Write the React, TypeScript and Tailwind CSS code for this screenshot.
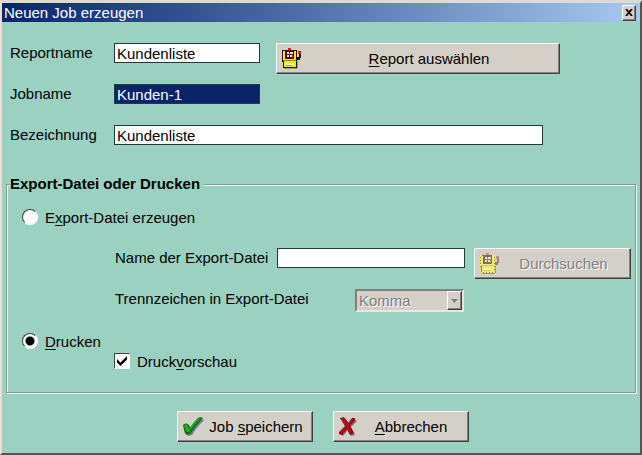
import React, { useState } from "react";
import type { ReactNode } from "react";

const raised =
  "border border-t-white border-l-white border-r-[#404040] border-b-[#404040] bg-[#d4d0c8] shadow-[inset_-1px_-1px_0_#808080]";
const field =
  "h-5 min-w-0 rounded-none border border-[#203a38] bg-white px-[2px] text-[15px] leading-[18px] text-black outline-none";

function Key({ children }: { children: ReactNode }) {
  return (
    <span className="underline decoration-1 underline-offset-2 [text-decoration-skip-ink:none]">
      {children}
    </span>
  );
}

function ReportIcon({ faded = false }: { faded?: boolean }) {
  const ink = faded ? "#8a8668" : "#1c1a00";
  const yellow = faded ? "#f0ea70" : "#f2ec1c";
  const red = faded ? "#b89090" : "#c82828";
  return (
    <svg width="22" height="24" viewBox="0 0 22 24" shapeRendering="crispEdges" aria-hidden="true">
      <path d="M3 20h13v2H3zM16 14h1v7h-1z" fill="#9a968c" />
      <path d="M1 3h15v12H1zM2 15h14v6H2z" fill={ink} />
      <path d="M2 4h13v10H2zM3 14h12v6H3z" fill={yellow} />
      {faded && <path d="M1.500 3v18M15.500 3v18M1 3.500h15M2 20.500h14" stroke={yellow} strokeDasharray="2 1" />}
      <path d="M4 3h9v9H4z" fill={faded ? "#8a6a60" : "#4a0820"} />
      <path d="M6 5h2v2H6zM9 5h3v2H9zM6 8h2v2H6zM9 8h2v2H9z" fill="#f6e4ee" />
      <path d="M8 6h1v2H8zM11 8h1v3h-1z" fill={red} />
      <path d="M2 13h13v1H2z" fill={faded ? "#cfc85c" : "#8c8600"} />
      <path d="M5 16h3v1h2v-1h3v1h-1v1H5z" fill="#fffcc8" />
      <path d="M5 18h6v1H5z" fill={faded ? "#d2cb60" : "#b0a800"} />
      <path d="M7 1h3v2H7z" fill={red} />
      <path d="M16 10h2V6h2v5h-1v2h-3z" fill={ink} />
      <path d="M17 4h3v3h-3z" fill={red} />
    </svg>
  );
}

function CheckIcon() {
  return (
    <svg width="22" height="22" viewBox="0 0 22 22" aria-hidden="true">
      <path d="M3 11 L7 10 L10 13 C13 8 16 4 20 3 L22 4 C17 9 13 14 10 19 L6 20 Z" fill="#7a74a8" />
      <path d="M1 9 C3 7 5 7 7 9 L8 12 C11 7 14 3 18 1 L21 2 C16 7 12 12 9 17 L5 19 C2 17 2 13 1 9 Z" fill="#07700b" />
      <path d="M2 9 C4 8 5 9 6 10 L7 14 C10 9 13 4 18 2 L19 2 C14 7 10 11 7 16 L5 16 C3 14 3 11 2 9 Z" fill="#1cb421" />
    </svg>
  );
}

function CrossIcon() {
  return (
    <svg width="20" height="22" viewBox="0 0 20 22" aria-hidden="true">
      <path d="M4 4 L8 3 L11 8 L16 3 L19 5 L13 11 L17 19 L13 20 L10 14 L5 20 L2 18 L8 11 Z" fill="#77716f" />
      <path d="M2 2 L6 1 L10 7 L14 2 L17 2 L17 4 L12 10 L16 17 L12 19 L9 13 L4 19 L1 18 L1 16 L7 10 Z" fill="#8c0811" />
      <path d="M3 3 L6 2 L9 9 L14 3 L16 4 L10 10 L14 16 L11 17 L9 11 L4 17 L2 16 L8 10 Z" fill="#be0f1a" />
    </svg>
  );
}

function PushButton({
  icon,
  children,
  className,
  disabled = false,
}: {
  icon: ReactNode;
  children: ReactNode;
  className: string;
  disabled?: boolean;
}) {
  return (
    <button
      type="button"
      disabled={disabled}
      className={`flex h-[31px] items-center pl-1 ${raised} ${disabled ? "text-[#808080] [text-shadow:1px_1px_0_#fff]" : ""} ${className}`}
    >
      {icon}
      <span className="flex-1 pr-1 text-center">{children}</span>
    </button>
  );
}

function Radio({ id, checked, onChange }: { id: string; checked: boolean; onChange: () => void }) {
  return (
    <input
      id={id}
      type="radio"
      name="ziel"
      checked={checked}
      onChange={onChange}
      className="size-4 appearance-none rounded-full border border-t-[#404040] border-r-white border-b-white border-l-[#404040] bg-white checked:bg-[radial-gradient(circle,#000_4px,#fff_5px)]"
    />
  );
}

export default function App() {
  const [target, setTarget] = useState("drucken");
  const [preview, setPreview] = useState(true);
  const [report, setReport] = useState("Kundenliste");
  const [job, setJob] = useState("Kunden-1");
  const [description, setDescription] = useState("Kundenliste");

  return (
    <main className="flex min-h-screen flex-col border-2 border-t-[3px] border-t-[#dedbd4] border-r-[#505856] border-b-[#505856] border-l-[#e4e1da] bg-[#9ad1c0] font-['Liberation_Sans',Arial,sans-serif] text-[15px] leading-[18px] text-black">
      <header className="flex h-[19px] items-center justify-between bg-linear-to-r from-[#0a246a] to-[#a6caf0] pr-1 pl-[2px] text-white">
        <h1 className="text-[15px] font-medium">Neuen Job erzeugen</h1>
        <button
          type="button"
          aria-label="Schließen"
          className={`flex h-4 w-[14px] items-center justify-center ${raised}`}
        >
          <svg width="8" height="7" viewBox="0 0 8 7" aria-hidden="true">
            <path d="M1 0 L7 7 M7 0 L1 7" stroke="#000" strokeWidth="1.8" />
          </svg>
        </button>
      </header>

      <form className="flex flex-1 flex-col pt-[21px] pr-1 pl-1">
        <div className="flex h-[41px] items-start pl-1">
          <label htmlFor="report" className="w-[104px] leading-5">Reportname</label>
          <input
            id="report"
            value={report}
            onChange={(e) => setReport(e.target.value)}
            className={`w-[146px] ${field}`}
          />
          <PushButton icon={<ReportIcon />} className="ml-4 w-[284px]">
            <Key>R</Key>eport auswählen
          </PushButton>
        </div>
        <div className="flex h-[41px] items-start pl-1">
          <label htmlFor="job" className="w-[104px] leading-5">Jobname</label>
          <input
            id="job"
            value={job}
            onChange={(e) => setJob(e.target.value)}
            className="h-5 w-[146px] border border-[#203a38] bg-[#0a246a] px-[2px] text-[15px] leading-[18px] text-white outline-none"
          />
        </div>
        <div className="flex h-[41px] items-start pl-1">
          <label htmlFor="description" className="w-[104px] leading-5">Bezeichnung</label>
          <input
            id="description"
            value={description}
            onChange={(e) => setDescription(e.target.value)}
            className={`w-[429px] ${field}`}
          />
        </div>

        <fieldset className="mt-[9px] border border-[#809b92] pb-[21px] shadow-[1px_1px_0_#eef8f4,inset_1px_1px_0_#eef8f4]">
          <legend className="ml-[3px] bg-[#9ad1c0] pr-1 font-bold">
            Export-Datei oder Drucken
          </legend>

          <div className="mt-4 flex h-[39px] items-start gap-[7px] pl-[15px]">
            <Radio id="export" checked={target === "export"} onChange={() => setTarget("export")} />
            <label htmlFor="export">
              E<Key>x</Key>port-Datei erzeugen
            </label>
          </div>

          <div className="flex h-[41px] items-start pl-[108px]">
            <label htmlFor="file" className="w-[162px] leading-5">Name der Export-Datei</label>
            <input id="file" className={`w-[188px] ${field}`} />
            <PushButton icon={<ReportIcon faded />} disabled className="ml-[9px] w-[157px]">
              Durchsuchen
            </PushButton>
          </div>

          <div className="flex h-11 items-start pl-[108px]">
            <label htmlFor="separator" className="w-[240px] leading-5">
              Trennzeichen in Export-Datei
            </label>
            <div className="relative w-[109px]">
              <select
                id="separator"
                disabled
                className="h-[23px] w-full appearance-none rounded-none border-2 border-t-[#808080] border-r-[#e8e6e0] border-b-[#e8e6e0] border-l-[#808080] bg-[#d4d0c8] px-[2px] text-[15px] leading-[18px] text-[#808080] opacity-100 [text-shadow:1px_1px_0_#fff]"
              >
                <option>Komma</option>
              </select>
              <span
                className={`pointer-events-none absolute top-[2px] right-[2px] flex h-[19px] w-[15px] items-center justify-center ${raised}`}
              >
                <svg width="7" height="4" viewBox="0 0 7 4" aria-hidden="true">
                  <path d="M0 0h7L3.500 4z" fill="#808080" />
                </svg>
              </span>
            </div>
          </div>

          <div className="flex h-5 items-start gap-[7px] pl-[15px]">
            <Radio id="print" checked={target === "drucken"} onChange={() => setTarget("drucken")} />
            <label htmlFor="print">
              <Key>D</Key>rucken
            </label>
          </div>
          <div className="flex items-start gap-[7px] pl-[107px]">
            <span className="relative flex">
              <input
                id="preview"
                type="checkbox"
                checked={preview}
                onChange={(e) => setPreview(e.target.checked)}
                className="size-4 appearance-none border border-t-[#404040] border-r-white border-b-white border-l-[#404040] bg-white"
              />
              {preview && (
                <svg
                  width="16"
                  height="16"
                  viewBox="0 0 16 16"
                  className="pointer-events-none absolute inset-0"
                  aria-hidden="true"
                >
                  <path d="M3 6 L6.500 9.500 L13 3 V6.500 L6.500 13 L3 9.500 Z" fill="#000" />
                </svg>
              )}
            </span>
            <label htmlFor="preview">
              Druck<Key>v</Key>orschau
            </label>
          </div>
        </fieldset>

        <div className="mt-[18px] flex justify-center gap-5 pl-1">
          <PushButton icon={<CheckIcon />} className="w-[136px]">
            Job <Key>s</Key>peichern
          </PushButton>
          <PushButton icon={<CrossIcon />} className="w-[136px]">
            <Key>A</Key>bbrechen
          </PushButton>
        </div>
      </form>
    </main>
  );
}
